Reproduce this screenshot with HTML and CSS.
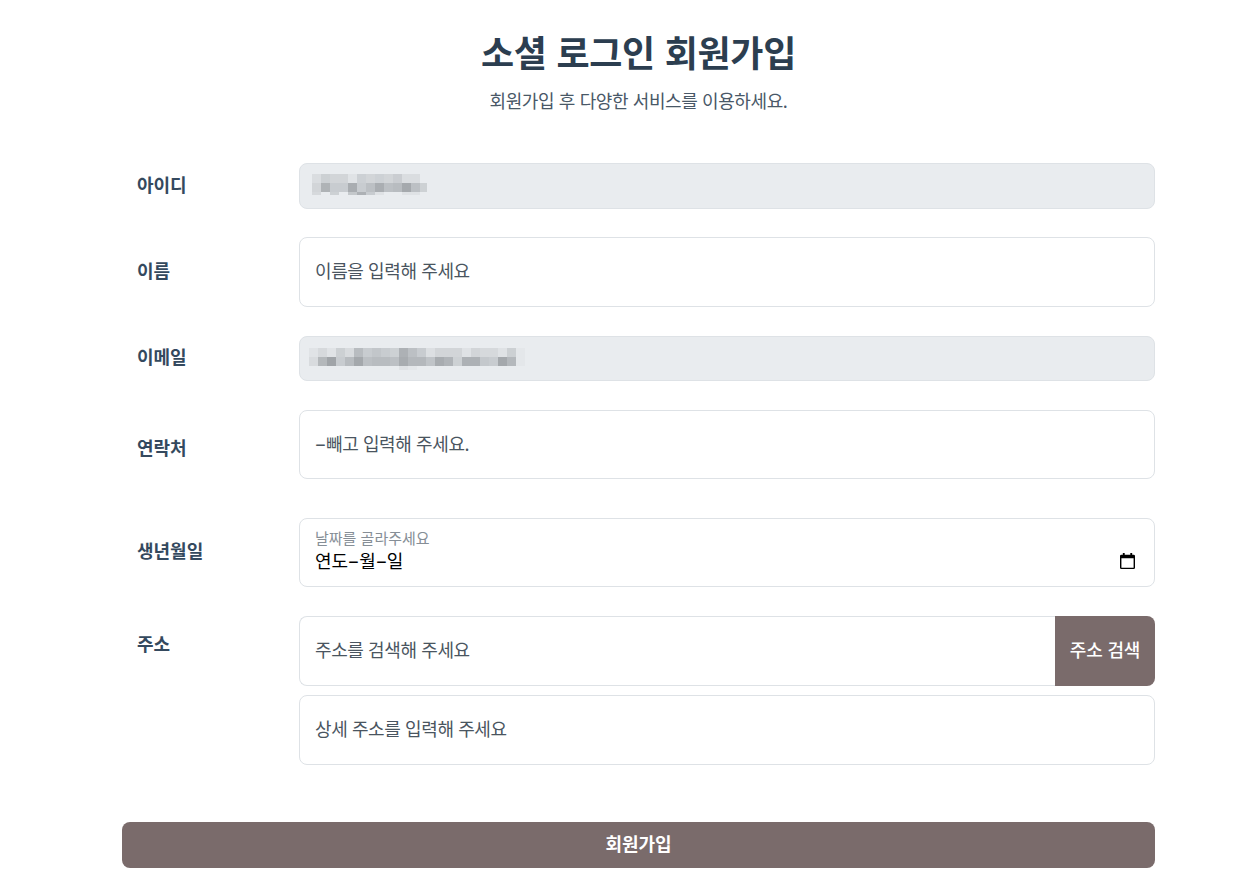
FILE: index.html
```html
<!DOCTYPE html>
<html lang="ko">
<head>
<meta charset="utf-8">
<title>소셜 로그인 회원가입</title>
<link rel="stylesheet" href="styles.css">
</head>
<body>
<main class="page">
  <header class="head">
    <h1 class="title">소셜 로그인 회원가입</h1>
    <p class="subtitle">회원가입 후 다양한 서비스를 이용하세요.</p>
  </header>
  <form class="form">
    <div class="row row-id">
      <label class="label">아이디</label>
      <div class="field field-readonly">
        <svg class="mosaic" width="115" height="21" viewBox="0 0 115 21" shape-rendering="crispEdges" aria-hidden="true">
          <rect x="0" y="0" width="9" height="9" fill="#dadde0"/>
          <rect x="9" y="0" width="9" height="9" fill="#ccd0d3"/>
          <rect x="18" y="0" width="18" height="9" fill="#d2d5d8"/>
          <rect x="36" y="0" width="9" height="9" fill="#e0e3e6"/>
          <rect x="45" y="0" width="9" height="9" fill="#ccd0d4"/>
          <rect x="54" y="0" width="9" height="9" fill="#d2d5d8"/>
          <rect x="63" y="0" width="9" height="9" fill="#cdd1d5"/>
          <rect x="72" y="0" width="9" height="9" fill="#d2d5d8"/>
          <rect x="81" y="0" width="9" height="9" fill="#cacdd1"/>
          <rect x="90" y="0" width="18" height="9" fill="#dadde0"/>
          <rect x="0" y="9" width="9" height="9" fill="#d2d5d8"/>
          <rect x="9" y="9" width="9" height="9" fill="#afb3b6"/>
          <rect x="18" y="9" width="18" height="9" fill="#c8ccd0"/>
          <rect x="36" y="9" width="9" height="9" fill="#a9adb1"/>
          <rect x="45" y="9" width="9" height="9" fill="#c8ccd0"/>
          <rect x="54" y="9" width="9" height="9" fill="#bcc0c4"/>
          <rect x="63" y="9" width="9" height="9" fill="#aaaeb2"/>
          <rect x="72" y="9" width="9" height="9" fill="#bcc0c4"/>
          <rect x="81" y="9" width="9" height="9" fill="#b8bcc0"/>
          <rect x="90" y="9" width="9" height="9" fill="#a5a9ad"/>
          <rect x="99" y="9" width="9" height="9" fill="#bcc0c4"/>
          <rect x="108" y="9" width="7" height="9" fill="#cdd1d4"/>
          <rect x="0" y="18" width="9" height="3" fill="#d6d9dc"/>
          <rect x="18" y="18" width="9" height="3" fill="#cdd1d4"/>
          <rect x="36" y="18" width="9" height="3" fill="#c4c8cb"/>
          <rect x="45" y="18" width="9" height="3" fill="#adb1b5"/>
          <rect x="54" y="18" width="9" height="3" fill="#c8ccd0"/>
          <rect x="63" y="18" width="9" height="3" fill="#dfe2e5"/>
          <rect x="90" y="18" width="18" height="3" fill="#dfe2e5"/>
        </svg>
      </div>
    </div>
    <div class="row row-name">
      <label class="label">이름</label>
      <div class="field"><span class="hint">이름을 입력해 주세요</span></div>
    </div>
    <div class="row row-email">
      <label class="label label-up">이메일</label>
      <div class="field field-readonly field-email">
        <svg class="mosaic" width="216" height="22" viewBox="0 0 216 22" shape-rendering="crispEdges" aria-hidden="true">
          <rect x="0" y="0" width="9" height="9" fill="#e0e3e6"/>
          <rect x="9" y="0" width="9" height="9" fill="#d6d9dc"/>
          <rect x="18" y="0" width="9" height="9" fill="#e0e3e6"/>
          <rect x="27" y="0" width="9" height="9" fill="#ccd0d3"/>
          <rect x="36" y="0" width="9" height="9" fill="#d8dbde"/>
          <rect x="45" y="0" width="9" height="9" fill="#b8bcc0"/>
          <rect x="54" y="0" width="9" height="9" fill="#c8ccd0"/>
          <rect x="63" y="0" width="9" height="9" fill="#c2c6ca"/>
          <rect x="72" y="0" width="9" height="9" fill="#c8ccd0"/>
          <rect x="81" y="0" width="9" height="9" fill="#cdd1d4"/>
          <rect x="90" y="0" width="9" height="9" fill="#adb1b5"/>
          <rect x="99" y="0" width="9" height="9" fill="#bcc0c4"/>
          <rect x="108" y="0" width="9" height="9" fill="#c8ccd0"/>
          <rect x="117" y="0" width="9" height="9" fill="#dcdfe2"/>
          <rect x="126" y="0" width="27" height="9" fill="#d2d5d8"/>
          <rect x="153" y="0" width="9" height="9" fill="#dfe2e5"/>
          <rect x="162" y="0" width="9" height="9" fill="#d2d5d8"/>
          <rect x="171" y="0" width="18" height="9" fill="#d6d9dc"/>
          <rect x="189" y="0" width="9" height="9" fill="#dfe2e5"/>
          <rect x="198" y="0" width="9" height="9" fill="#ccd0d3"/>
          <rect x="207" y="0" width="9" height="18" fill="#e4e7ea"/>
          <rect x="0" y="9" width="9" height="9" fill="#d8dbde"/>
          <rect x="9" y="9" width="9" height="9" fill="#b4b8bb"/>
          <rect x="18" y="9" width="9" height="9" fill="#a0a4a8"/>
          <rect x="27" y="9" width="9" height="9" fill="#c8ccd0"/>
          <rect x="36" y="9" width="9" height="9" fill="#b8bcc0"/>
          <rect x="45" y="9" width="9" height="9" fill="#a4a8ac"/>
          <rect x="54" y="9" width="9" height="9" fill="#bcc0c4"/>
          <rect x="63" y="9" width="18" height="9" fill="#b8bcc0"/>
          <rect x="81" y="9" width="9" height="9" fill="#bcc0c4"/>
          <rect x="90" y="9" width="9" height="9" fill="#a8acb0"/>
          <rect x="99" y="9" width="18" height="9" fill="#b4b8bc"/>
          <rect x="117" y="9" width="9" height="9" fill="#c0c4c8"/>
          <rect x="126" y="9" width="9" height="9" fill="#a8acb0"/>
          <rect x="135" y="9" width="9" height="9" fill="#b0b4b8"/>
          <rect x="144" y="9" width="9" height="9" fill="#cdd1d4"/>
          <rect x="153" y="9" width="18" height="9" fill="#adb1b5"/>
          <rect x="171" y="9" width="9" height="9" fill="#c4c8cc"/>
          <rect x="180" y="9" width="9" height="9" fill="#c8ccd0"/>
          <rect x="189" y="9" width="9" height="9" fill="#a4a8ac"/>
          <rect x="198" y="9" width="9" height="9" fill="#b4b8bc"/>
          <rect x="90" y="18" width="9" height="4" fill="#dfe2e5"/>
          <rect x="99" y="18" width="9" height="4" fill="#e4e7ea"/>
        </svg>
      </div>
    </div>
    <div class="row row-phone">
      <label class="label label-low">연락처</label>
      <div class="field"><span class="hint hint-down"><span class="dash">-</span>빼고 입력해 주세요.</span></div>
    </div>
    <div class="row row-birth">
      <label class="label label-up">생년월일</label>
      <div class="field field-date">
        <div class="date-text">
          <span class="date-hint">날짜를 골라주세요</span>
          <span class="date-value">연도<span class="dash">-</span>월<span class="dash">-</span>일</span>
        </div>
        <svg class="cal" width="15" height="16" viewBox="0 0 16 18" preserveAspectRatio="none" aria-hidden="true">
          <path fill="#000" d="M3 0h2v2h6V0h2v2h1.500A1.500 1.500 0 0 1 16 3.500V16.500A1.500 1.500 0 0 1 14.500 18H1.500A1.500 1.500 0 0 1 0 16.500V3.500A1.500 1.500 0 0 1 1.500 2H3zM1.500 6v10.500h13V6z"/>
        </svg>
      </div>
    </div>
    <div class="row row-address">
      <label class="label label-top">주소</label>
      <div class="address">
        <div class="address-search">
          <div class="field field-joined"><span class="hint">주소를 검색해 주세요</span></div>
          <button type="button" class="btn-search">주소 검색</button>
        </div>
        <div class="field"><span class="hint">상세 주소를 입력해 주세요</span></div>
      </div>
    </div>
    <button type="button" class="btn-submit">회원가입</button>
  </form>
</main>
</body>
</html>
```
FILE: styles.css
```css
* { box-sizing: border-box; }
html, body { margin: 0; padding: 0; background: #fff; }
body {
  font-family: "Noto Sans CJK KR", "Noto Sans", sans-serif;
  color: #2c3e50;
}
.page { width: 1033px; margin-left: 122px; }
.head { text-align: center; padding-top: 25px; height: 163px; }
.title {
  margin: 0;
  font-size: 36px;
  line-height: 52px;
  font-weight: 700;
  color: #2c3e50;
  letter-spacing: -0.3px;
}
.subtitle {
  margin: 10px 0 0;
  font-size: 18px;
  line-height: 26px;
  font-weight: 400;
  color: #495867;
  letter-spacing: -0.4px;
}
.form { display: flex; flex-direction: column; }
.row { display: flex; align-items: center; padding-left: 15px; }
.label {
  width: 162px;
  flex: none;
  font-size: 18px;
  line-height: 26px;
  font-weight: 700;
  color: #34495e;
  padding-bottom: 4px;
  height: 30px;
}
.label-low { position: relative; top: 4px; }
.label-up { position: relative; top: -1px; }
.label-top { align-self: flex-start; margin-top: 14px; }
.field {
  flex: 1;
  height: 70px;
  display: flex;
  align-items: center;
  padding: 0 15px;
  background: #fff;
  border: 1px solid #dee2e6;
  border-radius: 8px;
}
.field-readonly { height: 46px; background: #e9ecef; padding: 10px 12px 0; align-items: flex-start; }
.field-email { height: 45px; padding: 11px 9px 0; }
.hint { font-size: 18px; line-height: 26px; color: #4a5560; letter-spacing: -0.4px; padding-bottom: 4px; }
.hint-down { position: relative; top: 1px; }
.dash {
  display: inline-block;
  width: 11px;
  text-align: center;
  font-family: "Inter", sans-serif;
  letter-spacing: 0;
  transform: scaleX(1.5);
}
.mosaic { display: block; }
.row-name { margin-top: 28px; }
.row-email { margin-top: 29px; }
.row-phone { margin-top: 29px; height: 69px; }
.row-phone .field { height: 69px; }
.row-birth { margin-top: 39px; }
.row-birth .field { height: 69px; }
.row-address { margin-top: 29px; align-items: flex-start; }
.field-date { justify-content: space-between; padding-right: 19px; }
.date-text { display: flex; flex-direction: column; padding-bottom: 4px; }
.date-hint { font-size: 15px; line-height: 20px; color: #868e96; letter-spacing: 0; }
.date-value { font-size: 18px; line-height: 24px; color: #000; }
.cal { margin-top: 17px; }
.address { flex: 1; display: flex; flex-direction: column; gap: 9px; }
.address-search { display: flex; }
.address .field { flex: none; }
.address-search .field-joined { flex: 1; border-radius: 8px 0 0 8px; border-right: 0; }
.btn-search {
  width: 100px;
  height: 70px;
  flex: none;
  border: 0;
  border-radius: 0 8px 8px 0;
  background: #7a6b6b;
  color: #fff;
  font: 500 18px/26px "Noto Sans CJK KR", sans-serif;
  letter-spacing: -0.2px;
  padding: 0 0 4px;
}
.btn-submit {
  margin-top: 57px;
  width: 100%;
  height: 46px;
  border: 0;
  border-radius: 8px;
  background: #7a6b6b;
  color: #fff;
  font: 700 18px/26px "Noto Sans CJK KR", sans-serif;
  padding: 0 0 4px;
}
```
